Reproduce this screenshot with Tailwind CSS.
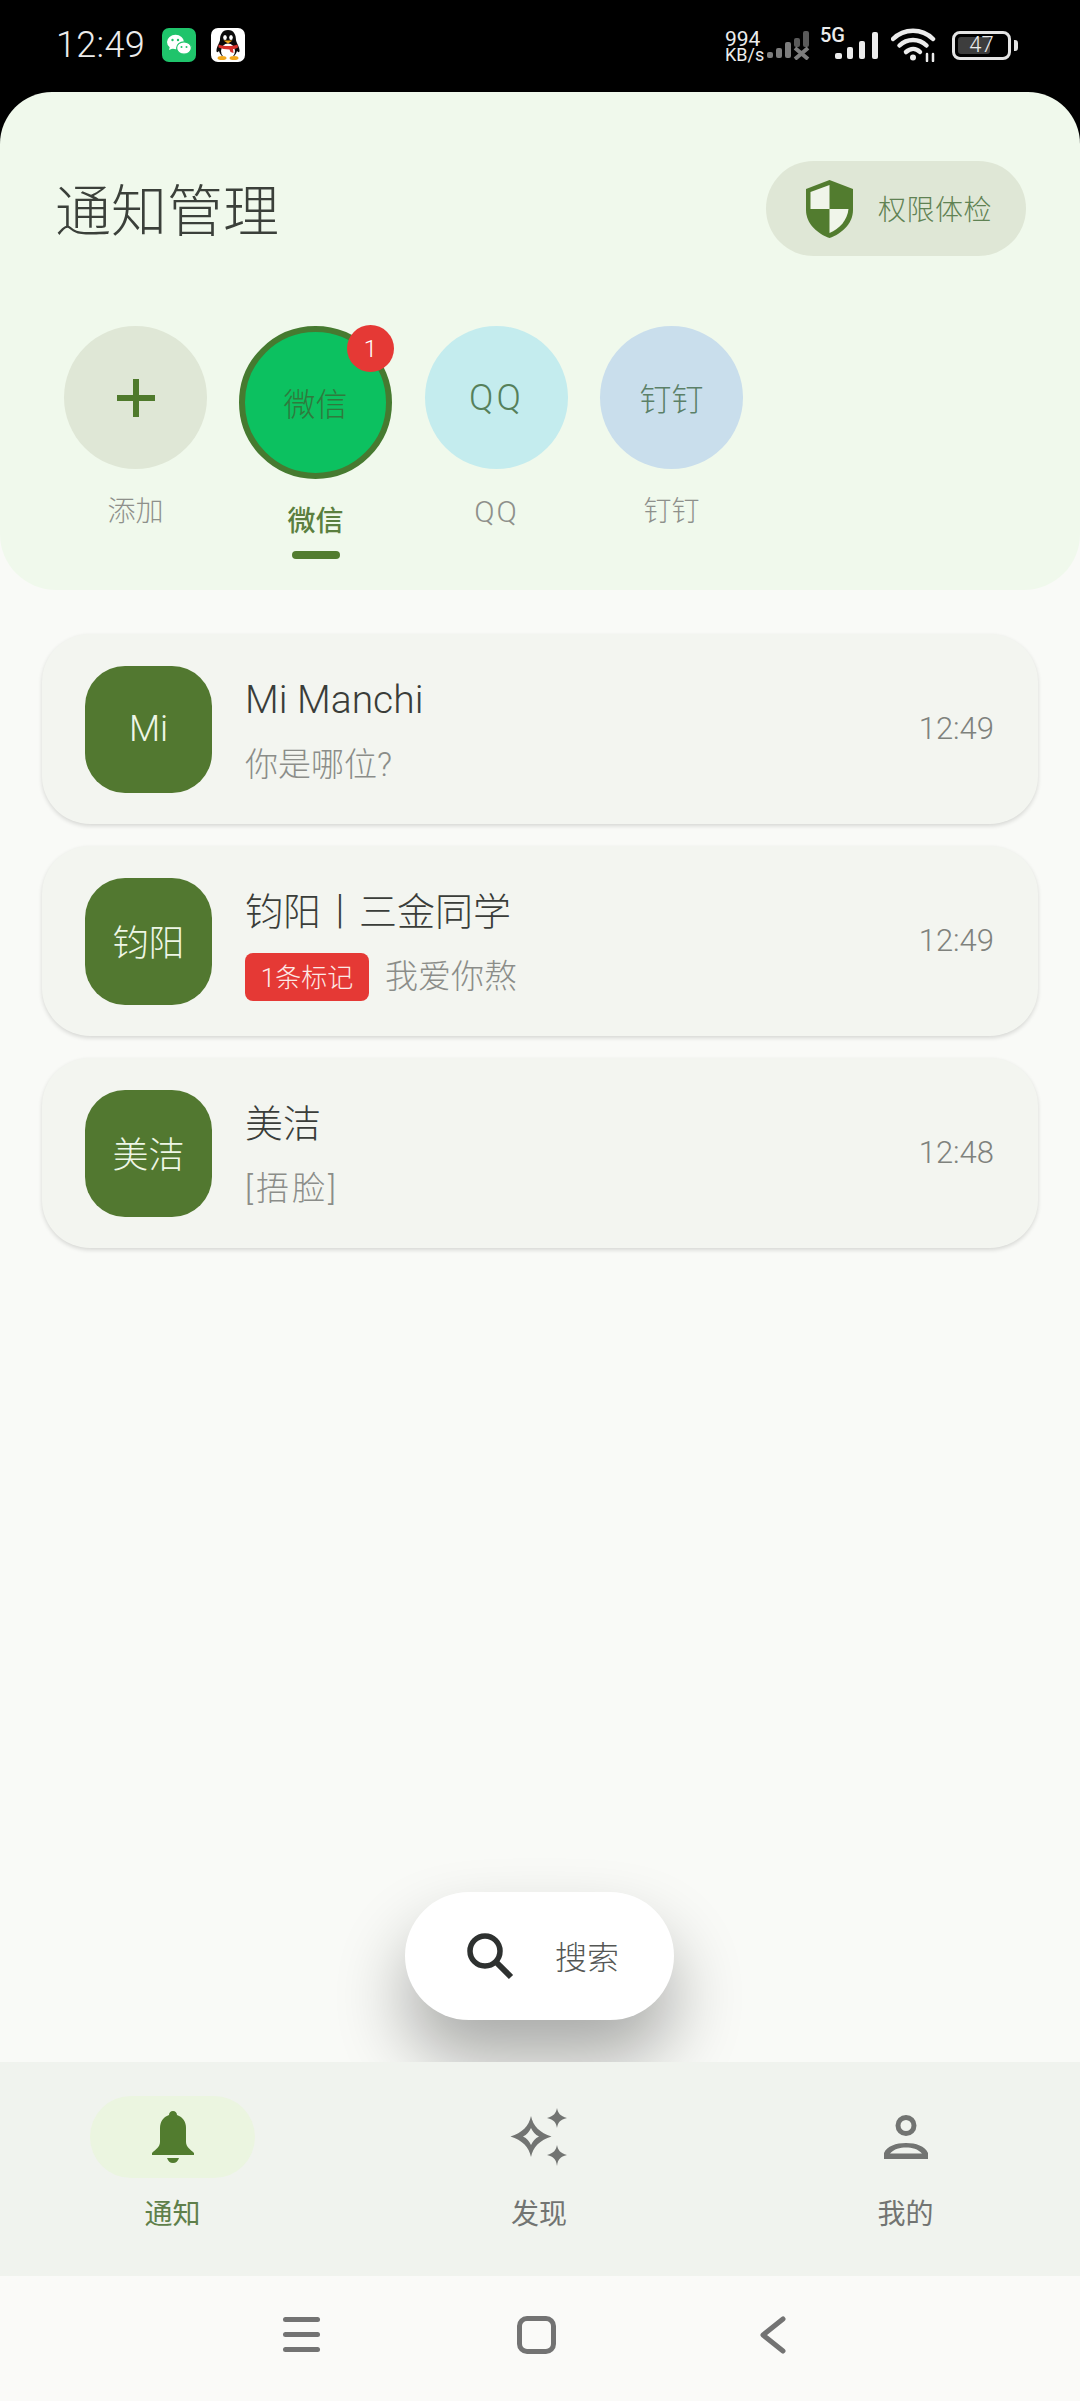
<!DOCTYPE html>
<html lang="zh-CN">
<head>
    <meta charset="UTF-8">
    <meta name="viewport" content="width=device-width, initial-scale=1.0">
    <title>通知管理</title>
    <script src="https://cdn.jsdelivr.net/npm/@tailwindcss/browser@4"></script>
</head>
<body class="bg-[#f9faf7]">
<div class="w-[1080px] h-[2401px] flex flex-col overflow-hidden bg-[#f9faf7] font-[Roboto,'Noto_Sans_CJK_SC',sans-serif] font-light">

    <!-- Status bar + header -->
    <div class="bg-[linear-gradient(#000_200px,#f9faf7_200px)]">
        <div class="h-[92px] flex items-center pl-[56px] pb-[2px] text-[#ececec]">
            <span class="text-[36px] leading-none w-[106px] tracking-[0.3px]">12:49</span>
            <!-- wechat -->
            <svg class="w-[34px] h-[34px]" viewBox="0 0 34 34">
                <rect width="34" height="34" rx="7" fill="#1fc46b"/>
                <ellipse cx="13.5" cy="14" rx="8.5" ry="7.2" fill="#fff"/>
                <path d="M8 18l-1 4 5-2z" fill="#fff"/>
                <ellipse cx="22" cy="20" rx="7.4" ry="6.2" fill="#fff" stroke="#1fc46b" stroke-width="1.2"/>
                <circle cx="10.5" cy="12" r="1.2" fill="#1fc46b"/>
                <circle cx="16" cy="12" r="1.2" fill="#1fc46b"/>
                <circle cx="19.5" cy="19" r="1" fill="#1fc46b"/>
                <circle cx="24.5" cy="19" r="1" fill="#1fc46b"/>
            </svg>
            <!-- qq -->
            <svg class="w-[34px] h-[34px] ml-[15px]" viewBox="0 0 34 34">
                <rect width="34" height="34" rx="7" fill="#fff"/>
                <path d="M17 2c-6 0-8 5-8 10 0 2-3 6-3.500 10-.3 3 1.500 2.500 2.500 1 1 3 2 4 3 5h12c1-1 2-2 3-5 1 1.500 2.800 2 2.500-1-.5-4-3.500-8-3.500-10 0-5-2-10-8-10z" fill="#0b0b0b"/>
                <ellipse cx="17" cy="23" rx="7" ry="7.500" fill="#fff"/>
                <ellipse cx="14" cy="9.500" rx="1.800" ry="2.500" fill="#fff"/>
                <ellipse cx="20" cy="9.500" rx="1.800" ry="2.500" fill="#fff"/>
                <path d="M12.500 12.500h9l-4.500 3z" fill="#f2a71b"/>
                <path d="M7.500 16.500c6 2 13 2 19 0l.5 3c-2 1-4 1.500-5 1.500l.5 4-3-1-1-2.500c-4 0-8-1-11-2z" fill="#d8322b"/>
                <ellipse cx="11" cy="30" rx="4.500" ry="2" fill="#f2a71b"/>
                <ellipse cx="23" cy="30" rx="4.500" ry="2" fill="#f2a71b"/>
            </svg>
            <div class="ml-auto flex items-center pr-[69px]">
                <div class="w-[37px] pt-[2px] font-normal">
                    <div class="text-[21px] leading-[17px]">994</div>
                    <div class="text-[18px] leading-[14px]">KB/s</div>
                </div>
                <!-- signal 1, no service -->
                <svg class="w-[44px] h-[30px] ml-[4px]" viewBox="0 0 44 30" fill="#7d7d7d">
                    <rect x="1" y="22" width="6" height="6" rx="2"/>
                    <rect x="10" y="18" width="6" height="10" rx="2"/>
                    <rect x="19" y="12" width="6" height="16" rx="2"/>
                    <rect x="28" y="8" width="6" height="9" rx="2" fill="#5a5a5a"/>
                    <rect x="37" y="1" width="6" height="16" rx="2" fill="#5a5a5a"/>
                    <path d="M29 18l13 11M42 18L29 29" stroke="#7d7d7d" stroke-width="4"/>
                </svg>
                <div class="relative w-[60px] h-[32px] ml-[10px]">
                    <span class="absolute left-0 top-[-4px] text-[20px] leading-[20px] font-medium">5G</span>
                    <svg class="absolute left-[15px] top-[3px] w-[45px] h-[28px]" viewBox="0 0 45 28" fill="#ececec">
                        <rect x="0" y="21" width="7" height="6" rx="2"/>
                        <rect x="12" y="15" width="6" height="12" rx="2"/>
                        <rect x="24" y="9" width="6" height="18" rx="2"/>
                        <rect x="37" y="0" width="6" height="27" rx="2"/>
                    </svg>
                </div>
                <!-- wifi -->
                <svg class="w-[46px] h-[34px] ml-[11px]" viewBox="0 0 46 34" fill="none" stroke="#ececec" stroke-linecap="round">
                    <path d="M2 11C13 0 31 0 42 11" stroke-width="4.500"/>
                    <path d="M8.500 17.500C16 10 28 10 35.500 17.500" stroke-width="4.500"/>
                    <path d="M15 24c4.500-4 10-4 14 0" stroke-width="4.500"/>
                    <circle cx="22" cy="29.500" r="3" fill="#ececec" stroke="none"/>
                    <path d="M36 26v7M42 26v7" stroke-width="2.500"/>
                </svg>
                <!-- battery -->
                <div class="ml-[15px] relative w-[59px] h-[29px] rounded-[8px] border-[3px] border-[#e4e4e4] p-[3px]">
                    <div class="w-[32px] h-full rounded-[3px] bg-[#3d3d3d]"></div>
                    <span class="absolute inset-0 flex items-center justify-center text-[22px] leading-none">47</span>
                    <div class="absolute right-[-10px] top-[6px] w-[4px] h-[11px] rounded-r-[3px] bg-[#e4e4e4]"></div>
                </div>
            </div>
        </div>

        <div class="h-[498px] rounded-t-[52px] rounded-b-[56px] bg-[#f0f9ec]">
            <div class="flex items-center justify-between pl-[55px] pr-[54px] pt-[69px]">
                <h1 class="h-[95px] text-[56px] leading-[103px] text-[#3b403a] font-light">通知管理</h1>
                <div class="w-[260px] h-[95px] rounded-full bg-[#dfe7d6] flex items-center pl-[39px]">
                    <svg class="w-[49px] h-[58px]" viewBox="0 0 49 58">
                        <path d="M24.500 0L48 9v21c0 14-12 24-23.500 28C13 54 1 44 1 30V9z" fill="#527c2f"/>
                        <path d="M5.500 12L24.500 5v24H5.500z" fill="#f0f5ea"/>
                        <path d="M24.500 29H43.500c-1 11-9 20-19 24z" fill="#f0f5ea"/>
                    </svg>
                    <span class="ml-[24px] mt-[5px] text-[28px] tracking-[0.5px] text-[#5f8253]">权限体检</span>
                </div>
            </div>

            <div class="flex gap-[32px] pl-[64px] pt-[70px] text-[28px] leading-[40px] text-[#8e908b]">
                <div class="w-[143px] flex flex-col items-center">
                    <div class="w-[143px] h-[143px] rounded-full bg-[#dfe7d6] flex items-center justify-center">
                        <svg class="w-[38px] h-[38px]" viewBox="0 0 38 38" fill="#4f7a2c"><rect x="16" y="0" width="6" height="38"/><rect x="0" y="16" width="38" height="6"/></svg>
                    </div>
                    <span class="mt-[23px]">添加</span>
                </div>
                <div class="w-[153px] flex flex-col items-center">
                    <div class="relative w-[153px] h-[153px] pt-[5px] rounded-full bg-[#0cc160] border-[6px] border-[#467a30] flex items-center justify-center text-[32px] text-[#2f7a3d]">
                        微信
                        <span class="absolute right-[-8px] top-[-7px] w-[47px] h-[47px] rounded-full bg-[#e53935] text-white text-[24px] leading-none flex items-center justify-center">1</span>
                    </div>
                    <span class="mt-[23px] font-medium text-[#5b7f3f]">微信</span>
                    <div class="mt-[9px] w-[48px] h-[8px] rounded-full bg-[#527c2f]"></div>
                </div>
                <div class="w-[143px] ml-px flex flex-col items-center">
                    <div class="w-[143px] h-[143px] rounded-full bg-[#c4ecee] flex items-center justify-center text-[36px] text-[#55805a] tracking-[3px]">QQ</div>
                    <span class="mt-[23px] text-[30px] tracking-[2px]">QQ</span>
                </div>
                <div class="w-[143px] flex flex-col items-center">
                    <div class="w-[143px] h-[143px] pt-[5px] rounded-full bg-[#c9deec] flex items-center justify-center text-[32px] text-[#5b8068]">钉钉</div>
                    <span class="mt-[23px]">钉钉</span>
                </div>
            </div>
        </div>
    </div>

    <!-- Conversations -->
    <div class="relative flex-1 flex flex-col gap-[22px] px-[42px] pt-[44px]">
        <div class="h-[190px] rounded-[48px] bg-[#f3f5f0] shadow-[0_2px_4px_rgba(0,0,0,0.14)] flex items-center pl-[43px] pr-[44px]">
            <div class="w-[127px] h-[127px] rounded-[40px] bg-[#527830] flex items-center justify-center text-[36px] text-[#eef6e6]">Mi</div>
            <div class="ml-[33px] pt-[7px] flex-1">
                <div class="text-[39px] leading-[48px] text-[#3a3d39]">Mi Manchi</div>
                <div class="mt-[17px] text-[33px] leading-[48px] text-[#8b8d89]">你是哪位?</div>
            </div>
            <span class="text-[31px] text-[#7f827d]">12:49</span>
        </div>
        <div class="h-[190px] rounded-[48px] bg-[#f3f5f0] shadow-[0_2px_4px_rgba(0,0,0,0.14)] flex items-center pl-[43px] pr-[44px]">
            <div class="w-[127px] h-[127px] pt-[5px] rounded-[40px] bg-[#527830] flex items-center justify-center text-[36px] text-[#eef6e6]">钧阳</div>
            <div class="ml-[33px] pt-[7px] flex-1">
                <div class="text-[38px] leading-[48px] text-[#3a3d39]">钧阳丨三金同学</div>
                <div class="mt-[17px] flex items-center text-[33px] leading-[48px] text-[#8b8d89]">
                    <span class="w-[124px] h-[48px] pt-[2px] rounded-[8px] bg-[#e53935] text-[26px] text-[#fde9e7] flex items-center justify-center">1条标记</span>
                    <span class="ml-[16px]">我爱你熬</span>
                </div>
            </div>
            <span class="text-[31px] text-[#7f827d]">12:49</span>
        </div>
        <div class="h-[190px] rounded-[48px] bg-[#f3f5f0] shadow-[0_2px_4px_rgba(0,0,0,0.14)] flex items-center pl-[43px] pr-[44px]">
            <div class="w-[127px] h-[127px] pt-[5px] rounded-[40px] bg-[#527830] flex items-center justify-center text-[36px] text-[#eef6e6]">美洁</div>
            <div class="ml-[33px] pt-[7px] flex-1">
                <div class="text-[38px] leading-[48px] text-[#3a3d39]">美洁</div>
                <div class="mt-[17px] text-[33px] leading-[48px] tracking-[3px] text-[#8b8d89]">[捂脸]</div>
            </div>
            <span class="text-[31px] text-[#7f827d]">12:48</span>
        </div>

        <!-- Search button -->
        <div class="absolute left-[405px] bottom-[42px] w-[269px] h-[128px] rounded-full bg-white shadow-[0_40px_70px_rgba(0,0,0,0.32)] flex items-center pl-[61px]">
            <svg class="w-[48px] h-[48px]" viewBox="0 0 48 48" fill="none" stroke="#2e3130" stroke-width="5.500">
                <circle cx="19" cy="19" r="15"/>
                <path d="M30 30l15 15" stroke-width="6"/>
            </svg>
            <span class="ml-[41px] pt-[3px] text-[32px] text-[#555755]">搜索</span>
        </div>
    </div>

    <!-- Bottom navigation -->
    <nav class="relative z-10 h-[214px] bg-[#f0f3ee] flex justify-between pl-[90px] pr-[92px] pt-[34px] text-[28px] leading-[40px] font-normal">
        <div class="w-[165px] flex flex-col items-center">
            <div class="w-[165px] h-[82px] rounded-full bg-[#ebf5e0] flex items-center justify-center">
                <svg class="w-[44px] h-[52px]" viewBox="0 0 44 52" fill="#527c2f">
                    <path d="M22 0c2.500 0 4 2 4 4 6 2 9 7 9 13v14c0 5 5 8 8 11v2H1v-2c3-3 8-6 8-11V17c0-6 3-11 9-13 0-2 1.500-4 4-4z"/>
                    <path d="M16 47h12c-1 3-3 5-6 5s-5-2-6-5z"/>
                </svg>
            </div>
            <span class="mt-[17px] text-[#5f7f4a]">通知</span>
        </div>
        <div class="w-[165px] flex flex-col items-center">
            <div class="h-[82px] flex items-center justify-center">
                <svg class="w-[58px] h-[58px]" viewBox="0 0 58 58" fill="#727472">
                    <path fill-rule="evenodd" d="M21 8C23 18 30 25 41.500 28.500 30 32 23 39 21 49 19 39 12 32 .5 28.500 12 25 19 18 21 8zM21 20C19 24 17 26.500 13 28.500 17 30.500 19 33 21 37 23 33 25 30.500 29 28.500 25 26.500 23 24 21 20z"/>
                    <path d="M47 0c1 5 3 8 10 10-7 2-9 4-10 10-1-6-3-8-10-10 7-2 9-5 10-10z"/>
                    <path d="M47 37c1 5 3 8 10 10-7 2-9 4-10 11-1-7-3-9-10-11 7-2 9-5 10-10z"/>
                </svg>
            </div>
            <span class="mt-[17px] text-[#727472]">发现</span>
        </div>
        <div class="w-[165px] flex flex-col items-center">
            <div class="h-[82px] flex items-center justify-center">
                <svg class="w-[44px] h-[44px]" viewBox="0 0 44 44" fill="#727472">
                    <circle cx="22" cy="10.500" r="8" fill="none" stroke="#727472" stroke-width="5"/>
                    <path fill-rule="evenodd" d="M0 44V38C3 31 12 28 22 28S41 31 44 38V44zM6 38.500H38C34 34 28 32.500 22 32.500S10 34 6 38.500z"/>
                </svg>
            </div>
            <span class="mt-[17px] text-[#727472]">我的</span>
        </div>
    </nav>

    <!-- System navigation -->
    <div class="h-[125px] bg-[#fafaf8] flex items-center pl-[283px] pb-[8px]">
        <div class="w-[37px] flex flex-col gap-[10px]">
            <div class="h-[5px] rounded-full bg-[#737373]"></div>
            <div class="h-[5px] rounded-full bg-[#737373]"></div>
            <div class="h-[5px] rounded-full bg-[#737373]"></div>
        </div>
        <div class="ml-[197px] w-[39px] h-[38px] rounded-[10px] border-[5px] border-[#737373]"></div>
        <svg class="ml-[204px] w-[26px] h-[38px]" viewBox="0 0 26 38" fill="none" stroke="#737373" stroke-width="5" stroke-linecap="round" stroke-linejoin="round">
            <path d="M23 3L3 19l20 16"/>
        </svg>
    </div>
</div>
</body>
</html>
